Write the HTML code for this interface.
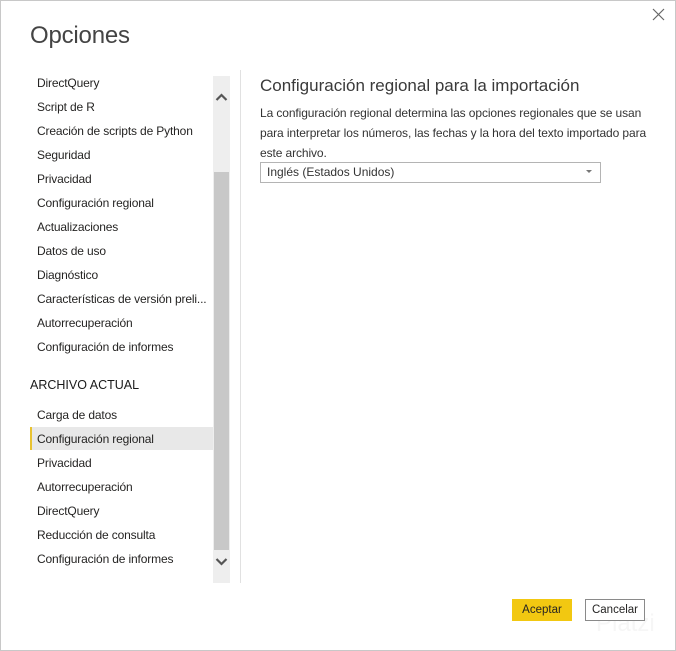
<!DOCTYPE html>
<html><head><meta charset="utf-8"><style>
*{margin:0;padding:0;box-sizing:border-box}
body{width:676px;height:651px;background:#fff;font-family:"Liberation Sans",sans-serif;color:#252423;position:relative;overflow:hidden}
.frame{position:absolute;left:0;top:0;width:676px;height:651px;border:1px solid #c8c8c8}
.t{position:absolute;white-space:nowrap}
.it{position:absolute;left:37px;font-size:12px;letter-spacing:-0.15px;line-height:16px}
</style></head><body>
<div class="frame"></div>
<div class="t" style="left:30px;top:22px;font-size:24px;color:#444;letter-spacing:-0.2px">Opciones</div>
<svg style="position:absolute;left:652px;top:8px" width="13" height="13"><path d="M1 1L12 12M12 1L1 12" stroke="#666" stroke-width="1.2"/></svg>

<div class="it" style="top:75px">DirectQuery</div>
<div class="it" style="top:99px">Script de R</div>
<div class="it" style="top:123px">Creación de scripts de Python</div>
<div class="it" style="top:147px">Seguridad</div>
<div class="it" style="top:171px">Privacidad</div>
<div class="it" style="top:195px">Configuración regional</div>
<div class="it" style="top:219px">Actualizaciones</div>
<div class="it" style="top:243px">Datos de uso</div>
<div class="it" style="top:267px">Diagnóstico</div>
<div class="it" style="top:291px">Características de versión preli...</div>
<div class="it" style="top:315px">Autorrecuperación</div>
<div class="it" style="top:339px">Configuración de informes</div>
<div class="t" style="left:30px;top:377px;font-size:12.5px;line-height:16px;color:#1a1a1a">ARCHIVO ACTUAL</div>
<div class="it" style="top:407px">Carga de datos</div>
<div style="position:absolute;left:30px;top:427px;width:183px;height:23px;background:#e8e8e8"></div>
<div style="position:absolute;left:30px;top:427px;width:2px;height:23px;background:#e8c230"></div>
<div class="it" style="top:431px">Configuración regional</div>
<div class="it" style="top:455px">Privacidad</div>
<div class="it" style="top:479px">Autorrecuperación</div>
<div class="it" style="top:503px">DirectQuery</div>
<div class="it" style="top:527px">Reducción de consulta</div>
<div class="it" style="top:551px">Configuración de informes</div>

<div style="position:absolute;left:213px;top:76px;width:17px;height:507px;background:#eeeeee"></div>
<div style="position:absolute;left:214px;top:172px;width:15px;height:378px;background:#c8c8c8"></div>
<svg style="position:absolute;left:215px;top:92px" width="13" height="10"><path d="M1.5 8L6.5 3L11.5 8" stroke="#555" stroke-width="2.2" fill="none"/></svg>
<svg style="position:absolute;left:215px;top:557px" width="13" height="10"><path d="M1.5 2L6.5 7L11.5 2" stroke="#555" stroke-width="2.2" fill="none"/></svg>
<div style="position:absolute;left:240px;top:70px;width:1px;height:513px;background:#e1e1e1"></div>

<div class="t" style="left:260px;top:76px;font-size:17px;color:#3a3a3a">Configuración regional para la importación</div>
<div class="t" style="left:260px;top:103px;font-size:12px;line-height:20px;color:#333;white-space:normal;width:400px;letter-spacing:-0.1px">La configuración regional determina las opciones regionales que se usan para interpretar los números, las fechas y la hora del texto importado para este archivo.</div>
<div style="position:absolute;left:260px;top:162px;width:341px;height:21px;border:1px solid #b4b4b4"></div>
<div class="t" style="left:267px;top:165px;font-size:12px;color:#333">Inglés (Estados Unidos)</div>
<svg style="position:absolute;left:586px;top:170px" width="6" height="4"><path d="M0 0H6L3 3Z" fill="#777"/></svg>

<div class="t" style="left:596px;top:610px;font-size:24px;color:#f6f6f6">Platzi</div>
<div style="position:absolute;left:512px;top:599px;width:60px;height:22px;background:#f2c811"></div>
<div class="t" style="left:512px;top:603px;width:60px;line-height:15px;text-align:center;font-size:11.5px;color:#252423">Aceptar</div>
<div style="position:absolute;left:585px;top:599px;width:60px;height:22px;border:1px solid #8a8a8a;background:#fff"></div>
<div class="t" style="left:585px;top:603px;width:60px;line-height:15px;text-align:center;font-size:11.5px;color:#252423">Cancelar</div>
</body></html>
